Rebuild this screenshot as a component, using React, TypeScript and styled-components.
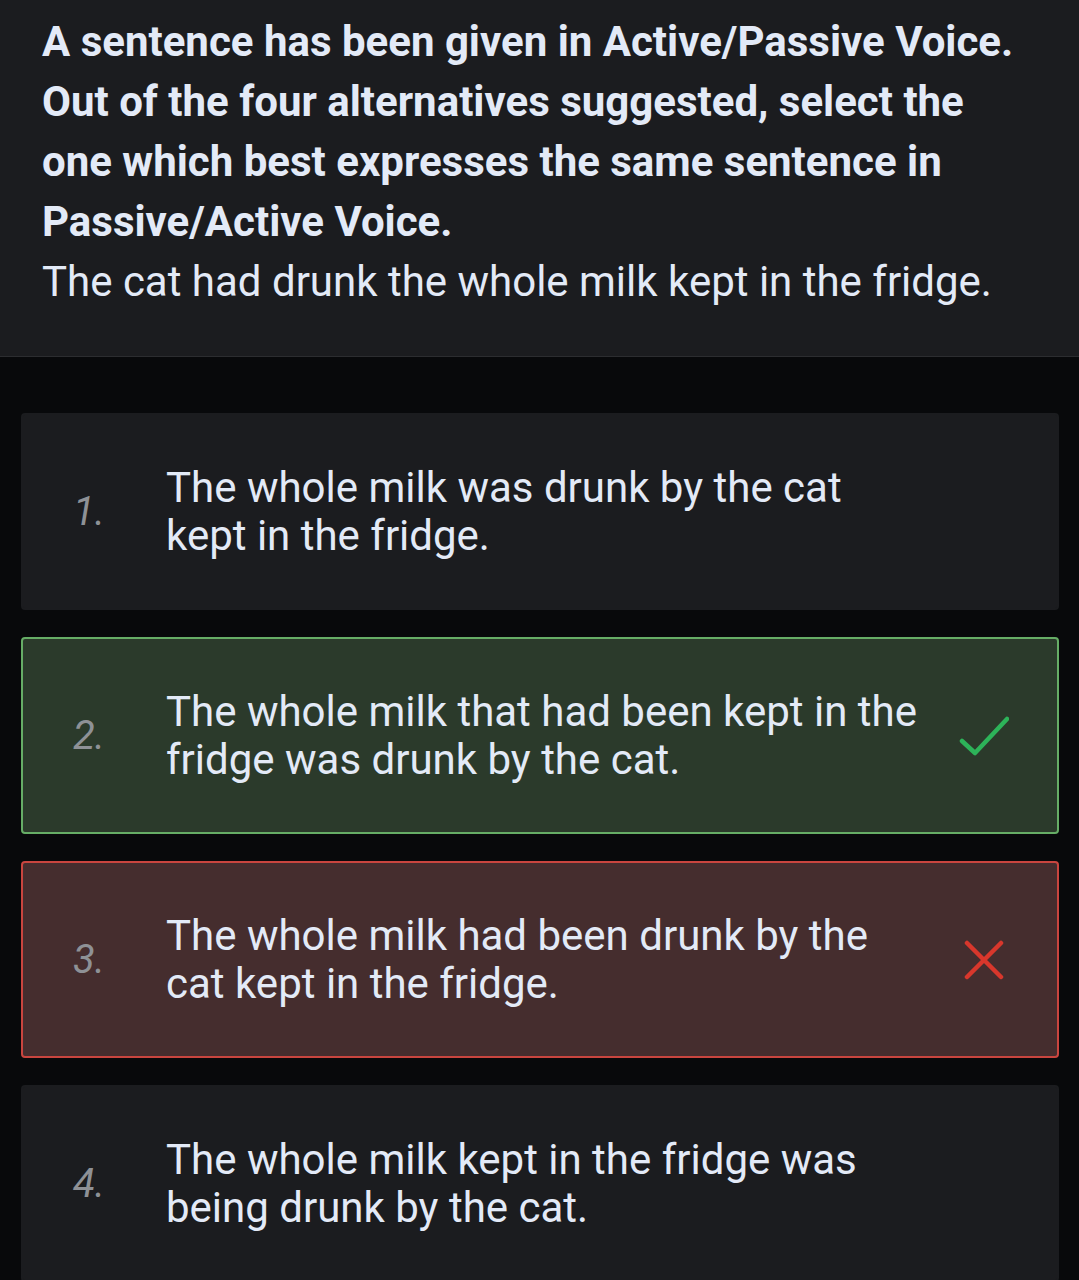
import styled, { createGlobalStyle } from "styled-components";

const GlobalStyle = createGlobalStyle`
  html, body {
    margin: 0;
    padding: 0;
    background: #08090b;
  }
  body {
    font-family: Roboto, "Noto Sans", "Liberation Sans", sans-serif;
    color: #e3eaf7;
  }
`;

const Page = styled.div`
  width: 1079px;
  min-height: 1280px;
  background: #08090b;
`;

const Question = styled.header`
  background: #1b1c1f;
  border-bottom: 1px solid #2c2d30;
  padding: 12px 60px 44px 42px;
`;

const Prompt = styled.p`
  margin: 0;
  font-size: 42px;
  line-height: 60px;
  font-weight: 700;
  color: #e3eaf7;
`;

const Sentence = styled.p`
  margin: 0;
  font-size: 42px;
  line-height: 60px;
  font-weight: 400;
  color: #e3eaf7;
`;

const Options = styled.ul`
  list-style: none;
  margin: 0;
  padding: 56px 20px 0 21px;
  display: flex;
  flex-direction: column;
  gap: 27px;
`;

type Status = "none" | "correct" | "wrong";

const palette: Record<Status, { bg: string; border: string }> = {
  none: { bg: "#1b1c1f", border: "#1b1c1f" },
  correct: { bg: "#2b3a2b", border: "#66ad66" },
  wrong: { bg: "#452d2e", border: "#c9453f" },
};

const Card = styled.li<{ $status: Status }>`
  box-sizing: border-box;
  min-height: 197px;
  display: flex;
  align-items: center;
  background: ${(p) => palette[p.$status].bg};
  border: 2px solid ${(p) => palette[p.$status].border};
  border-radius: 4px;
`;

const Num = styled.span`
  width: 93px;
  margin-left: 50px;
  font-size: 40px;
  font-style: italic;
  color: #8e9196;
  flex-shrink: 0;
`;

const Text = styled.span`
  width: 752px;
  font-size: 42px;
  line-height: 48px;
  color: #e3eaf7;
  flex-shrink: 0;
`;

const Mark = styled.span`
  flex: 1;
  display: flex;
  justify-content: center;
  padding-right: 8px;
`;

const Check = () => (
  <svg width="50" height="40" viewBox="0 0 50 40">
    <path d="M3 25 L16 37 L48 3" fill="none" stroke="#2db359" strokeWidth="4.5" strokeLinecap="round" strokeLinejoin="round" />
  </svg>
);

const Cross = () => (
  <svg width="40" height="40" viewBox="0 0 40 40">
    <path d="M3 3 L37 37 M37 3 L3 37" fill="none" stroke="#d8372c" strokeWidth="4.5" strokeLinecap="round" />
  </svg>
);

const options: { text: string; status: Status }[] = [
  { text: "The whole milk was drunk by the cat kept in the fridge.", status: "none" },
  { text: "The whole milk that had been kept in the fridge was drunk by the cat.", status: "correct" },
  { text: "The whole milk had been drunk by the cat kept in the fridge.", status: "wrong" },
  { text: "The whole milk kept in the fridge was being drunk by the cat.", status: "none" },
];

export default function App() {
  return (
    <Page>
      <GlobalStyle />
      <Question>
        <Prompt>
          A sentence has been given in Active/Passive Voice. Out of the four alternatives suggested, select the one
          which best expresses the same sentence in Passive/Active Voice.
        </Prompt>
        <Sentence>The cat had drunk the whole milk kept in the fridge.</Sentence>
      </Question>
      <Options>
        {options.map((o, i) => (
          <Card key={i} $status={o.status}>
            <Num>{i + 1}.</Num>
            <Text>{o.text}</Text>
            <Mark>
              {o.status === "correct" && <Check />}
              {o.status === "wrong" && <Cross />}
            </Mark>
          </Card>
        ))}
      </Options>
    </Page>
  );
}
